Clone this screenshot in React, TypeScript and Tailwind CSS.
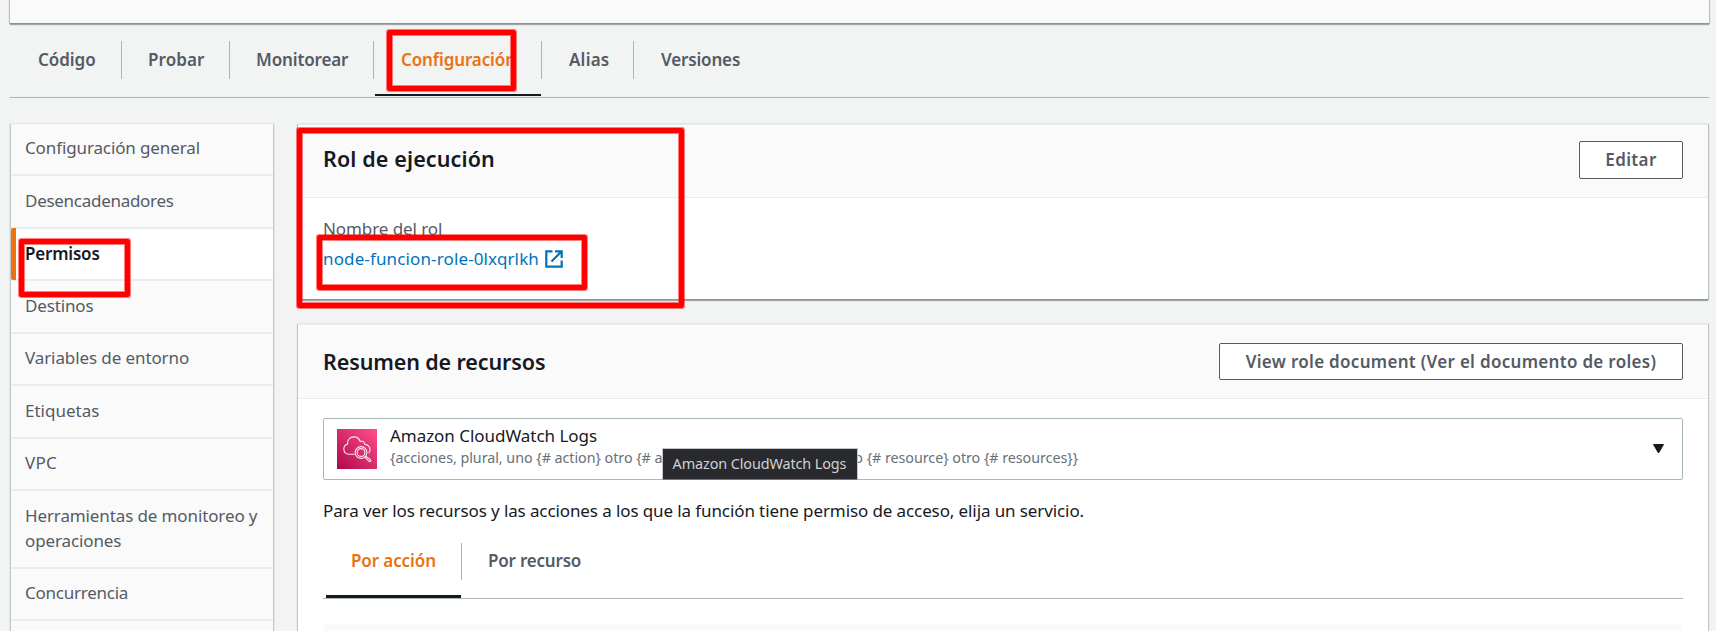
import type { ReactNode } from "react";

const tabs = [
  { label: "Código", cell: "w-[112px] pl-[28px]", track: "tracking-[-0.05px]", line: true },
  { label: "Probar", cell: "w-[108px] pl-[26px]", track: "tracking-[0.1px]", line: true },
  { label: "Monitorear", cell: "w-[144px] pl-[26px]", track: "tracking-[-0.13px]", line: true },
  { label: "Configuración", cell: "w-[168px] pl-[27px]", track: "tracking-[-0.12px]", line: true, active: true },
  { label: "Alias", cell: "w-[92px] pl-[27px]", track: "tracking-[0.2px]", line: true },
  { label: "Versiones", cell: "pl-[27px]", track: "tracking-[-0.16px]", line: false },
];

const menu = [
  { label: "Configuración general", box: "h-[52px] pt-[11px]", track: "tracking-[-0.12px]" },
  { label: "Desencadenadores", box: "h-[53px] pt-3", track: "tracking-[-0.28px]" },
  { label: "Permisos", box: "h-[52px] pt-3", track: "tracking-[-0.2px]", active: true },
  { label: "Destinos", box: "h-[53px] pt-3", track: "tracking-[-0.15px]" },
  { label: "Variables de entorno", box: "h-[52px] pt-[11px]", track: "tracking-[-0.1px]" },
  { label: "Etiquetas", box: "h-[53px] pt-3", track: "tracking-[0px]" },
  { label: "VPC", box: "h-[52px] pt-[11px]", track: "tracking-[0.2px]" },
  { label: "Herramientas de monitoreo y operaciones", box: "h-[78px] pt-3", track: "tracking-[-0.12px]" },
  { label: "Concurrencia", box: "h-[52px] pt-[11px]", track: "tracking-[-0.25px]" },
  { label: "", box: "h-[53px]", track: "" },
];

function Highlight({ place }: { place: string }) {
  return (
    <div
      className={`pointer-events-none absolute z-20 rounded-[2px] border-[5px] border-[#ff0000] shadow-[0_0_0_1px_rgba(255,0,0,0.5),inset_0_0_0_1px_rgba(255,0,0,0.5)] ${place}`}
    />
  );
}

function OutlineButton({ className, children }: { className: string; children: ReactNode }) {
  return (
    <button
      className={`rounded-[2px] border border-[#545b64] bg-white text-center font-semibold leading-[25px] whitespace-nowrap text-[#545b64] ${className}`}
    >
      {children}
    </button>
  );
}

function CloudWatchIcon() {
  return (
    <svg width="40" height="40" viewBox="0 0 40 40" className="shrink-0">
      <defs>
        <linearGradient id="cw" x1="0" y1="1" x2="1" y2="0">
          <stop offset="0" stopColor="#b0084d" />
          <stop offset="1" stopColor="#ff4f8b" />
        </linearGradient>
      </defs>
      <rect width="40" height="40" fill="url(#cw)" />
      <g fill="none" stroke="#fff" strokeOpacity="0.9" strokeWidth="1.1" strokeLinecap="round" strokeLinejoin="round">
        <path d="M17 25.2h-5.600c-2.700-.4-4.600-2.500-4.600-5.200 0-2.500 1.500-4.300 3.700-4.900-.4-4 2.300-7.200 6.400-7.200 3.200 0 5.400 1.900 6.300 4.700 1.800-1.300 4.200-.2 4.400 2.600 3 .4 5 2.300 5.400 5 .2 1.500-.2 2.700-1 3.700" />
        <circle cx="24" cy="23.500" r="5.900" />
        <circle cx="24" cy="23.500" r="3.900" />
        <path d="M28.700 27.100l4.700 3.600c1 1.100-.3 2.400-1.300 1.600l-4.300-4.100" />
      </g>
    </svg>
  );
}

export default function App() {
  return (
    <div className="relative flex h-[631px] w-[1716px] flex-col overflow-hidden bg-[#f2f3f3] pr-[7px] pl-[10px] font-['Noto_Sans',sans-serif] text-[17px] leading-[25px] text-[#16191f]">
      <div className="h-[24px] shrink-0 border-b border-[#879596] bg-[#fafafa] shadow-[0_1px_1px_rgba(0,28,36,0.3),1px_0_1px_rgba(0,28,36,0.2),-1px_0_1px_rgba(0,28,36,0.2)]" />

      <nav className="flex h-[74px] shrink-0 border-b border-[#aab7b8] pt-[17px]">
        {tabs.map((t) => (
          <div key={t.label} className={`relative flex h-[55px] shrink-0 ${t.cell}`}>
            <span className={`mt-[6px] font-semibold whitespace-nowrap ${t.track} ${t.active ? "text-[#ec7211]" : "text-[#545b64]"}`}>
              {t.label}
            </span>
            {t.line && <i className="absolute top-0 right-0 h-[38px] w-px bg-[#aab7b8]" />}
            {t.active && <i className="absolute right-px bottom-0 left-px h-[2px] bg-[#16191f]" />}
          </div>
        ))}
      </nav>

      <div className="flex h-[533px] shrink-0 items-stretch pt-[26px]">
        <aside className="mr-[24px] w-[264px] shrink-0 border-x border-[#c5cbcc] bg-[#fafafa] shadow-[0_0_1px_rgba(0,28,36,0.35)]">
          {menu.map((m, i) => (
            <div
              key={i}
              className={`relative border-b-2 border-[#eaeded] pl-[14px] ${m.box} ${m.track} ${
                m.active ? "bg-white font-semibold text-[#16191f]" : "text-[#545b64]"
              }`}
            >
              {m.active && <i className="absolute -top-px -bottom-px left-0 w-[5px] rounded-l-[2px] bg-[#ec7211]" />}
              <span className="block w-[240px]">{m.label}</span>
            </div>
          ))}
        </aside>

        <main className="flex w-[1410px] flex-col">
          <section className="h-[176px] shrink-0 border-b border-[#879596] bg-white shadow-[0_1px_1px_rgba(0,28,36,0.3),1px_0_1px_rgba(0,28,36,0.2),-1px_0_1px_rgba(0,28,36,0.2)]">
            <header className="flex h-[74px] items-start justify-between border-y border-[#eaeded] bg-[#fafafa] pt-[16px] pr-[25px] pl-[25px]">
              <h2 className="mt-[5px] text-[21.5px] font-semibold tracking-[0.12px]">Rol de ejecución</h2>
              <OutlineButton className="h-[38px] w-[104px] pb-[2px] tracking-[0.35px]">Editar</OutlineButton>
            </header>
            <div className="pt-[18px] pl-[25px]">
              <p className="tracking-[-0.08px] text-[#545b64]">Nombre del rol</p>
              <a className="mt-[5px] flex items-center tracking-[0.13px] text-[#0073bb]">
                node-funcion-role-0lxqrlkh
                <svg width="18" height="18" viewBox="0 0 18 18" className="ml-[6px]" fill="none" stroke="#0073bb" strokeWidth="2.200">
                  <path d="M7.500 1.300H1.300v15.400h15.400v-6.200M10 1.300h6.700V8M16.500 1.500L6.500 11.500" />
                </svg>
              </a>
            </div>
          </section>

          <section className="mt-[24px] flex-1 bg-white shadow-[1px_0_1px_rgba(0,28,36,0.2),-1px_0_1px_rgba(0,28,36,0.2)]">
            <header className="flex h-[75px] items-center justify-between border-y border-[#eaeded] bg-[#fafafa] pr-[25px] pl-[25px]">
              <h2 className="-mt-px text-[21.5px] font-semibold tracking-[-0.12px]">Resumen de recursos</h2>
              <OutlineButton className="h-[37px] w-[464px] pb-px tracking-[0.3px]">
                View role document (Ver el documento de roles)
              </OutlineButton>
            </header>
            <div className="pr-[25px] pl-[25px]">
              <div className="relative mt-[19px] flex h-[62px] items-center rounded-[2px] border border-[#aab7b8] pr-[17px] pl-[13px]">
                <CloudWatchIcon />
                <div className="mb-[5px] ml-[13px] flex-1">
                  <div className="h-[22px] leading-[22px] tracking-[-0.04px]">Amazon CloudWatch Logs</div>
                  <div className="text-[14.3px] leading-[22px] tracking-[-0.035px] whitespace-nowrap text-[#687078]">
                    {"{acciones, plural, uno {# action} otro {# actions}}, {recursos, plural, uno {# resource} otro {# resources}}"}
                  </div>
                </div>
                <svg width="13" height="10" viewBox="0 0 13 10">
                  <path d="M1.500.5h10L6.500 9z" fill="#16191f" stroke="#16191f" strokeLinejoin="round" />
                </svg>
                <div className="absolute top-[29px] left-[338px] h-[32px] w-[196px] border border-[#c3c5c8] border-b-[#767676] bg-[#292a2d] pt-[4px] pr-px text-center text-[14.4px] leading-[22px] tracking-[-0.1px] whitespace-nowrap text-[#d0d1d3]">
                  Amazon CloudWatch Logs
                </div>
              </div>
              <p className="mt-[18px] tracking-[-0.105px] whitespace-nowrap">
                Para ver los recursos y las acciones a los que la función tiene permiso de acceso, elija un servicio.
              </p>
              <div className="mt-[20px] flex h-[56px] border-b border-[#aab7b8] font-semibold">
                <div className="relative w-[139px] pt-[5px] pl-[28px] tracking-[-0.1px] text-[#ec7211]">
                  Por acción
                  <i className="absolute top-0 right-0 h-[37px] w-px bg-[#aab7b8]" />
                  <i className="absolute right-px bottom-0 left-[3px] h-[3px] bg-[#16191f]" />
                </div>
                <div className="pt-[5px] pl-[26px] tracking-[-0.2px] text-[#545b64]">Por recurso</div>
              </div>
              <div className="mt-[25px] mr-[2px] ml-px h-[20px] bg-[#fafafa]" />
            </div>
          </section>
        </main>
      </div>

      <Highlight place="left-[387px] top-[30px] h-[61px] w-[129px]" />
      <Highlight place="left-[19px] top-[239px] h-[58px] w-[111px]" />
      <Highlight place="left-[297px] top-[128px] h-[180px] w-[387px]" />
      <Highlight place="left-[317px] top-[235px] h-[55px] w-[270px]" />
    </div>
  );
}
